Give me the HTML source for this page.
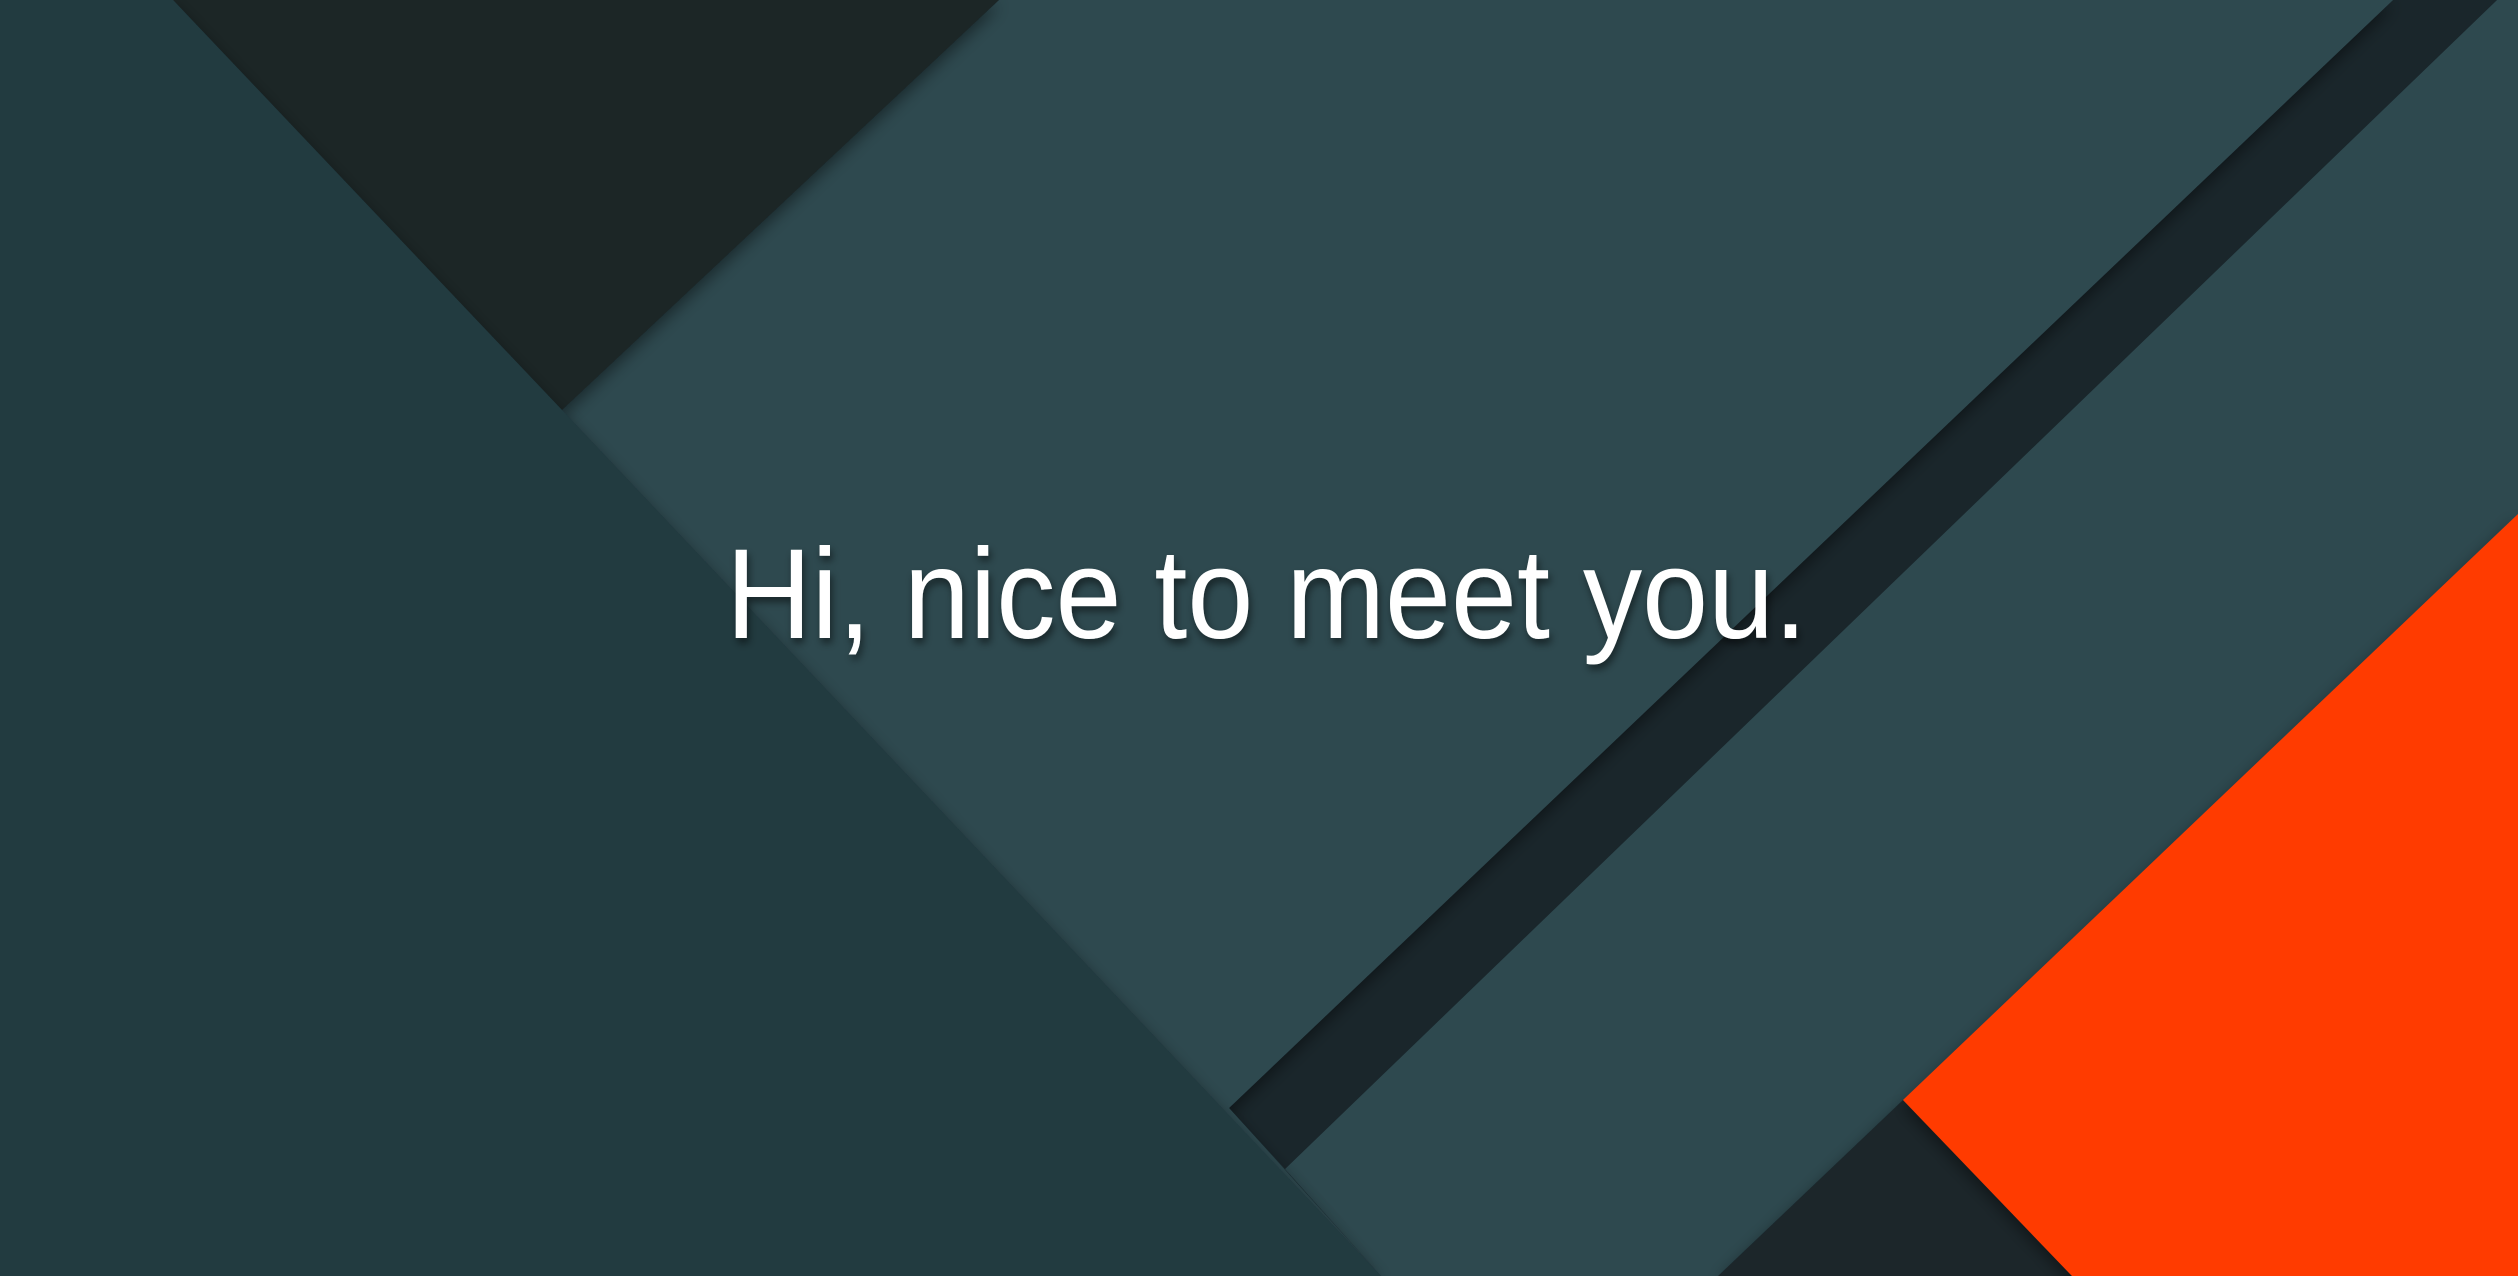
<!DOCTYPE html>
<html><head><meta charset="utf-8"><style>
html,body{margin:0;padding:0;width:2518px;height:1276px;overflow:hidden;background:#223a40}
svg{display:block}
</style></head><body>
<svg width="2518" height="1276" viewBox="0 0 2518 1276" xmlns="http://www.w3.org/2000/svg">
<defs>
<filter id="sh" x="-10%" y="-10%" width="120%" height="120%"><feDropShadow dx="0" dy="6" stdDeviation="8" flood-color="#000" flood-opacity="0.45"/></filter>
<filter id="ts"><feDropShadow dx="2" dy="5" stdDeviation="4" flood-color="#000" flood-opacity="0.5"/></filter>
</defs>
<rect width="2518" height="1276" fill="#223a40"/>
<polygon points="2497,0 2518,0 2518,1276 1381,1276 1285,1169" fill="#2f4950" filter="url(#sh)"/>
<polygon points="2393,0 2497,0 1285,1169 1229,1108" fill="#1a262b"/>
<polygon points="999,0 2393,0 1229,1108 1381,1276 562,410" fill="#2f4950" filter="url(#sh)"/>
<polygon points="173,0 999,0 562,410" fill="#1b2628" filter="url(#sh)"/>
<polygon points="0,0 173,0 562,410 1381,1276 0,1276" fill="#223a40" filter="url(#sh)"/>
<polygon points="1718,1276 1903,1100 2072,1276" fill="#1a262b" filter="url(#sh)"/>
<polygon points="1903,1100 2518,514 2518,1276 2072,1276" fill="#ff3a00" filter="url(#sh)"/>
<text x="726" y="638" font-family="Liberation Sans, sans-serif" font-size="128" fill="#ffffff" textLength="1081" lengthAdjust="spacingAndGlyphs" filter="url(#ts)">Hi, nice to meet you.</text>
</svg>
</body></html>
